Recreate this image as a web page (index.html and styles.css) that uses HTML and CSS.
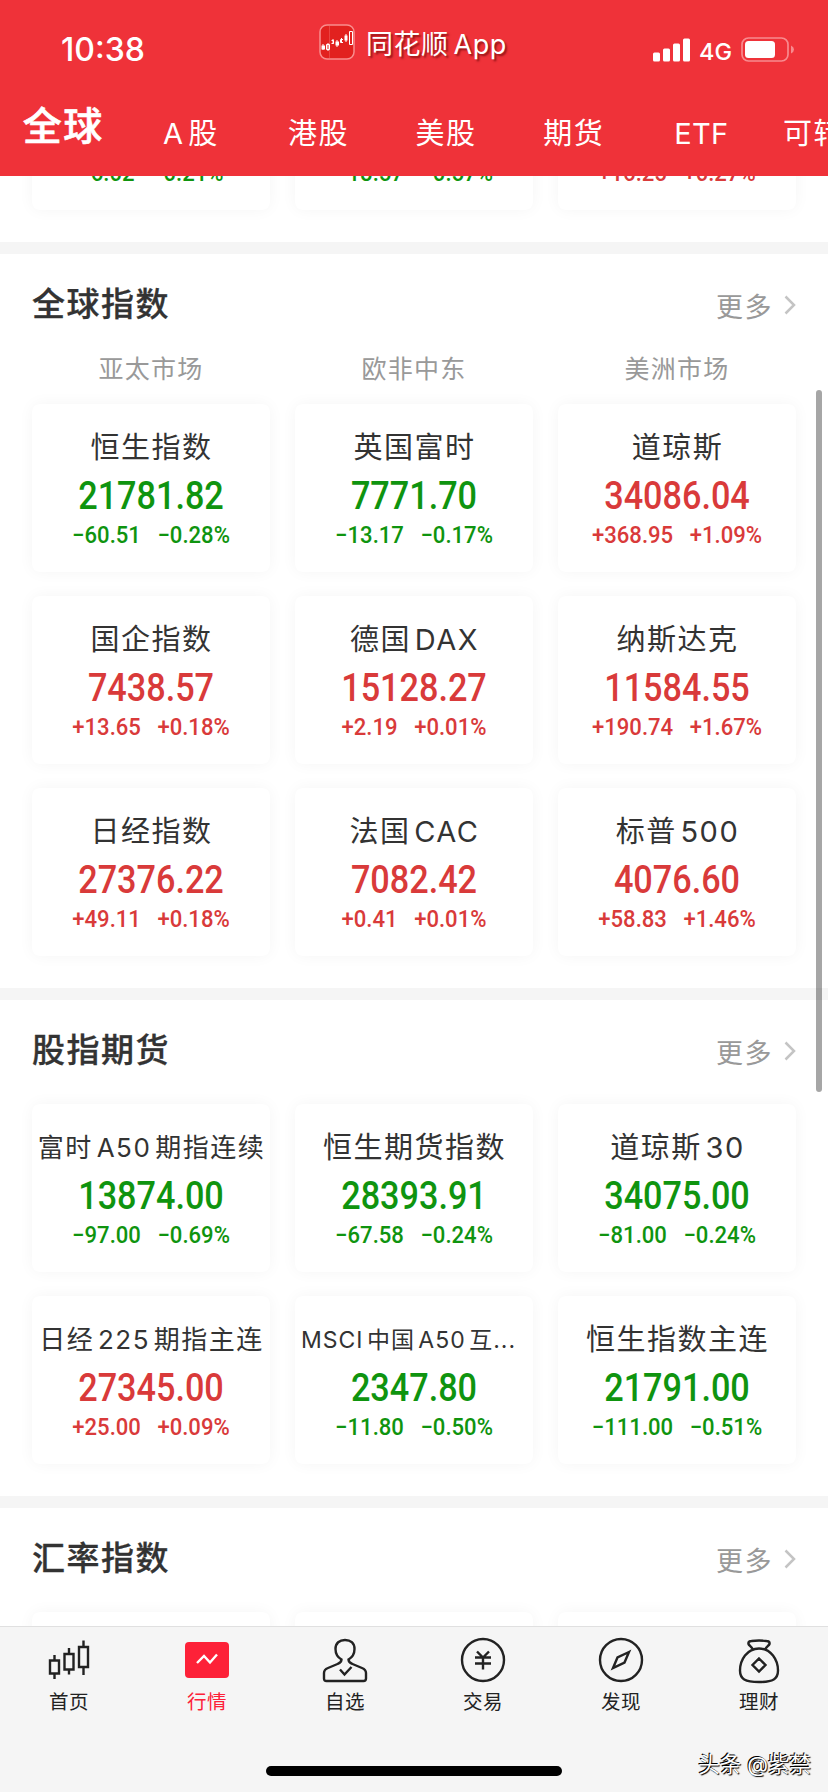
FILE: index.html
```
<!DOCTYPE html>
<html lang="zh-CN">
<head>
    <meta charset="UTF-8">
    <meta name="viewport" content="width=device-width, initial-scale=1.0">
    <title>同花顺 - 全球行情</title>
    <link rel="stylesheet" href="styles.css">
</head>
<body>
    <!-- 顶部 -->
    <header class="header">
        <div class="status-bar">
            <span class="time">10:38</span>
            <div class="brand">
                <svg class="brand-logo" viewBox="0 0 36 36">
                    <rect x="1" y="1" width="34" height="34" rx="7" fill="#e2211f" stroke="#f98d8d" stroke-width="1.5"/>
                    <path d="M10.5 2v32" stroke="#ee5350" stroke-width=".7"/>
                    <path fill="#fff" d="M2.500 21.500h3.500v4h-3.500zM16.500 17.500h3.500v4h-3.500zM25.500 11.500h3v5h-3z"/>
                    <path fill="none" stroke="#fff" stroke-width="1" d="M7.500 20.500h3v5h-3zM9 19v8M12.500 16.500h2v3h-2M14 15v5M24 15.500h-2.500v3H24M22.500 14v5M27 10v8M30.500 7.500h3v13h-3zM4 20v6M18 16v7"/>
                </svg>
                <span>同花顺 App</span>
            </div>
            <div class="status-icons">
                <svg class="signal" viewBox="0 0 38 24">
                    <g fill="#fff">
                        <rect x="0" y="14.500" width="7" height="9" rx="1.500"/>
                        <rect x="10" y="10.500" width="7" height="13" rx="1.500"/>
                        <rect x="20" y="5.500" width="7" height="18" rx="1.500"/>
                        <rect x="30" y="0.500" width="7" height="23" rx="1.500"/>
                    </g>
                </svg>
                <span class="network">4G</span>
                <svg class="battery" viewBox="0 0 54 26">
                    <rect x="1" y="1" width="46" height="23" rx="6.500" fill="none" stroke="#f88a8e" stroke-width="1.700"/>
                    <rect x="4" y="4" width="30" height="17" rx="3.500" fill="#fff"/>
                    <path d="M50 8.500q3 1.500 3 4t-3 4z" fill="#f88a8e"/>
                </svg>
            </div>
        </div>
        <nav class="market-tabs">
            <a class="active">全球</a>
            <a>A 股</a>
            <a>港股</a>
            <a>美股</a>
            <a>期货</a>
            <a class="latin">ETF</a>
            <a>可转债</a>
        </nav>
    </header>

    <!-- 行情列表 -->
    <main class="content">
        <section class="section scrolled">
            <div class="grid">
                <div class="card down"><h3>上证指数</h3><p class="price">3263.41</p><p class="change"><span>−6.02</span><span>−0.21%</span></p></div>
                <div class="card down"><h3>深证成指</h3><p class="price">12054.30</p><p class="change"><span>−18.57</span><span>−0.57%</span></p></div>
                <div class="card up"><h3>创业板指</h3><p class="price">2613.85</p><p class="change"><span>+16.25</span><span>+0.27%</span></p></div>
            </div>
        </section>

        <section class="section">
            <div class="section-head">
                <h2>全球指数</h2>
                <a class="more">更多 <svg viewBox="0 0 12 20"><path d="M1.500 1.500 10 10l-8.500 8.500"/></svg></a>
            </div>
            <div class="regions">
                <span>亚太市场</span>
                <span>欧非中东</span>
                <span>美洲市场</span>
            </div>
            <div class="grid">
                <div class="card down"><h3>恒生指数</h3><p class="price">21781.82</p><p class="change"><span>−60.51</span><span>−0.28%</span></p></div>
                <div class="card down"><h3>英国富时</h3><p class="price">7771.70</p><p class="change"><span>−13.17</span><span>−0.17%</span></p></div>
                <div class="card up"><h3>道琼斯</h3><p class="price">34086.04</p><p class="change"><span>+368.95</span><span>+1.09%</span></p></div>
                <div class="card up"><h3>国企指数</h3><p class="price">7438.57</p><p class="change"><span>+13.65</span><span>+0.18%</span></p></div>
                <div class="card up"><h3>德国 DAX</h3><p class="price">15128.27</p><p class="change"><span>+2.19</span><span>+0.01%</span></p></div>
                <div class="card up"><h3>纳斯达克</h3><p class="price">11584.55</p><p class="change"><span>+190.74</span><span>+1.67%</span></p></div>
                <div class="card up"><h3>日经指数</h3><p class="price">27376.22</p><p class="change"><span>+49.11</span><span>+0.18%</span></p></div>
                <div class="card up"><h3>法国 CAC</h3><p class="price">7082.42</p><p class="change"><span>+0.41</span><span>+0.01%</span></p></div>
                <div class="card up"><h3>标普 500</h3><p class="price">4076.60</p><p class="change"><span>+58.83</span><span>+1.46%</span></p></div>
            </div>
        </section>

        <section class="section">
            <div class="section-head">
                <h2>股指期货</h2>
                <a class="more">更多 <svg viewBox="0 0 12 20"><path d="M1.500 1.500 10 10l-8.500 8.500"/></svg></a>
            </div>
            <div class="grid">
                <div class="card down"><h3 class="long">富时 A50 期指连续</h3><p class="price">13874.00</p><p class="change"><span>−97.00</span><span>−0.69%</span></p></div>
                <div class="card down"><h3>恒生期货指数</h3><p class="price">28393.91</p><p class="change"><span>−67.58</span><span>−0.24%</span></p></div>
                <div class="card down"><h3>道琼斯 30</h3><p class="price">34075.00</p><p class="change"><span>−81.00</span><span>−0.24%</span></p></div>
                <div class="card up"><h3 class="long">日经 225 期指主连</h3><p class="price">27345.00</p><p class="change"><span>+25.00</span><span>+0.09%</span></p></div>
                <div class="card down"><h3 class="longer">MSCI 中国 A50 互...</h3><p class="price">2347.80</p><p class="change"><span>−11.80</span><span>−0.50%</span></p></div>
                <div class="card down"><h3>恒生指数主连</h3><p class="price">21791.00</p><p class="change"><span>−111.00</span><span>−0.51%</span></p></div>
            </div>
        </section>

        <section class="section">
            <div class="section-head">
                <h2>汇率指数</h2>
                <a class="more">更多 <svg viewBox="0 0 12 20"><path d="M1.500 1.500 10 10l-8.500 8.500"/></svg></a>
            </div>
            <div class="grid">
                <div class="card"></div>
                <div class="card"></div>
                <div class="card"></div>
            </div>
        </section>
    </main>
    <div class="scrollbar"></div>

    <!-- 底部导航 -->
    <footer class="footer">
        <nav class="tab-bar">
            <a>
                <svg viewBox="0 0 46 46"><path d="M4 19.500h9v13H4zM8.500 14v5.500M8.500 32.500v5.500M18.500 13h9v15.500h-9zM23 7v6M23 28.500v5M33 6h9v20h-9zM37.500-.5V6M37.500 26v8"/></svg>
                <span>首页</span>
            </a>
            <a class="active">
                <svg viewBox="0 0 46 46"><rect x="1" y="1" width="44" height="36" rx="4"/><path d="m13 22 7-7 6 6.500 7-8"/></svg>
                <span>行情</span>
            </a>
            <a>
                <svg viewBox="0 0 46 46"><path d="M19.500 18.500c-3.500-2-6-6-6-10.500 0-6 4-9 9.500-9s9.500 3 9.500 9c0 4.500-2.500 8.500-6 10.500 0 3 1.500 3.500 4 4.500l9.500 4c3 1.200 4 2.200 4 5v5.500q0 2.500-2.500 2.500h-37Q2 40 2 37.500V32c0-2.800 1-3.800 4-5l9.500-4c2.500-1 4-1.500 4-4.500zM18 28.500l4.500 5 7-7.500"/></svg>
                <span>自选</span>
            </a>
            <a>
                <svg viewBox="0 0 46 46"><circle cx="23" cy="19" r="21"/><path d="m17 10.500 6 6 6-6M15 16.500h16M15 22.500h16M23 16.500v12"/></svg>
                <span>交易</span>
            </a>
            <a>
                <svg viewBox="0 0 46 46"><circle cx="23" cy="19" r="21"/><path d="M31 11 19.500 16.500 15 27l11.500-5.500z"/></svg>
                <span>发现</span>
            </a>
            <a>
                <svg viewBox="0 0 46 46"><path d="M17 8.500C16 6 13 4.500 12.500 3c-.5-2 1-3 3-3q7.500-1 15 0c2 0 3.500 1 3 3C33 4.500 30 6 29 8.500M23 7.500C11 7.500 4 19 4 29.500 4 38 9 41 23 41s19-3 19-11.500C42 19 35 7.500 23 7.500zM23 17.500l6.500 6.500-6.500 6.500-6.500-6.500z"/></svg>
                <span>理财</span>
            </a>
        </nav>
        <div class="home-indicator"></div>
        <span class="watermark">头条 @紫禁</span>
    </footer>
</body>
</html>
```
FILE: styles.css
```
* {
    box-sizing: border-box;
    margin: 0;
    padding: 0;
}

body {
    position: relative;
    display: flex;
    flex-direction: column;
    width: 828px;
    height: 1792px;
    overflow: hidden;
    background: #fff;
    color: #333;
    font-family: Inter, "Noto Sans CJK SC", sans-serif;
}

/* 顶部 */
.header {
    flex: none;
    height: 176px;
    background: #ef3239;
    color: #fff;
}

.status-bar {
    display: grid;
    grid-template-columns: 319px 1fr auto;
    height: 96px;
    padding-right: 33px;
}

.time {
    padding: 30px 0 0 61px;
    font-size: 32px;
    line-height: 40px;
    font-weight: 500;
}

.brand {
    display: flex;
    align-items: center;
    gap: 11px;
    height: 84px;
    font-size: 27px;
    letter-spacing: 0.5px;
    word-spacing: -3px;
    text-shadow: 2px 2px 2px rgba(90, 0, 0, 0.6);
}

.brand-logo {
    width: 36px;
    height: 36px;
}

.status-icons {
    display: flex;
    align-items: center;
    height: 100px;
}

.signal {
    width: 38px;
    height: 24px;
}

.network {
    margin: 2px 9px 0 8px;
    font-size: 23.500px;
    font-weight: 500;
}

.battery {
    width: 54px;
    height: 26px;
}

.market-tabs {
    display: flex;
    height: 80px;
    margin-left: -1px;
    overflow: hidden;
}

.market-tabs a {
    flex: 0 0 127.600px;
    padding: 17px 0 0 1px;
    font-size: 29px;
    line-height: 42px;
    letter-spacing: 1.500px;
    word-spacing: -6px;
    text-align: center;
    white-space: nowrap;
}

.market-tabs .latin {
    letter-spacing: 0.300px;
}

.market-tabs .active {
    padding-top: 9px;
    font-size: 39px;
    font-weight: 500;
    -webkit-text-stroke: 0.600px #fff;
}

/* 行情列表 */
.content {
    flex: 1;
    min-height: 0;
    overflow: hidden;
}

.section {
    padding: 0 32px 32px;
    border-bottom: 12px solid #f5f5f5;
}

/* 首个板块已滚动到顶部栏下方 */
.scrolled .grid {
    margin-top: -134px;
}

.section-head {
    display: flex;
    align-items: center;
    justify-content: space-between;
    height: 98px;
    margin-bottom: 6px;
}

.section-head h2 {
    padding-bottom: 3px;
    font-size: 33px;
    font-weight: 500;
    letter-spacing: 1.500px;
    -webkit-text-stroke: 0.300px #333;
}

.more {
    display: flex;
    align-items: center;
    gap: 11px;
    padding-top: 4px;
    color: #999;
    font-size: 27px;
    letter-spacing: 1.500px;
}

.more svg {
    width: 12px;
    height: 20px;
    fill: none;
    stroke: #c4c4c4;
    stroke-width: 2.500;
}

.regions {
    display: grid;
    grid-template-columns: repeat(3, 1fr);
    column-gap: 25px;
    margin: -6px 0 18px;
    color: #999;
    font-size: 25px;
    line-height: 34px;
    letter-spacing: 1.200px;
    text-align: center;
}

.grid {
    display: grid;
    grid-template-columns: repeat(3, 1fr);
    gap: 24px 25px;
}

.card {
    height: 168px;
    padding-top: 23px;
    border-radius: 8px;
    background: #fff;
    box-shadow: 0 0 16px rgba(0, 0, 0, 0.045);
    text-align: center;
    white-space: nowrap;
}

.card h3 {
    padding-left: 1px;
    color: #333;
    font-size: 29px;
    font-weight: 400;
    line-height: 42px;
    letter-spacing: 1.500px;
    word-spacing: -6px;
}

.card .long {
    font-size: 26px;
    word-spacing: -5px;
}

.card .longer {
    padding-right: 12px;
    font-size: 23px;
    letter-spacing: 1px;
    word-spacing: -4px;
}

.price,
.change {
    font-family: Roboto, sans-serif;
    font-weight: 500;
}

.price {
    font-size: 38px;
    line-height: 54px;
    transform: scaleX(0.9);
}

.change {
    display: flex;
    justify-content: center;
    gap: 18px;
    margin-top: -2px;
    font-size: 24px;
    line-height: 28px;
    transform: scaleX(0.92);
}

.up {
    color: #d93a3a;
}

.down {
    color: #0f940f;
}

.scrollbar {
    position: absolute;
    top: 390px;
    right: 6px;
    width: 6px;
    height: 702px;
    border-radius: 3px;
    background: rgba(0, 0, 0, 0.35);
}

/* 底部导航 */
.footer {
    position: relative;
    flex: none;
    height: 166px;
    border-top: 1px solid #e0e0e0;
    background: #f5f5f5;
}

.tab-bar {
    display: flex;
    height: 139px;
}

.tab-bar a {
    flex: 1;
    display: flex;
    flex-direction: column;
    align-items: center;
    gap: 1px;
    padding-top: 14px;
    color: #222;
    font-size: 19.500px;
    line-height: 28px;
    letter-spacing: 0.500px;
}

.tab-bar svg {
    width: 46px;
    height: 46px;
    overflow: visible;
    fill: none;
    stroke: #222;
    stroke-width: 2.400;
}

.tab-bar .active {
    color: #fd2138;
}

.tab-bar .active rect {
    fill: #fd2138;
    stroke: none;
}

.tab-bar .active path {
    stroke: #fff;
}

.home-indicator {
    width: 296px;
    height: 10px;
    margin: 0 auto;
    border-radius: 5px;
    background: #000;
}

.watermark {
    position: absolute;
    right: 17px;
    bottom: 13px;
    color: #fff;
    font-size: 21.500px;
    line-height: 30px;
    text-shadow: -1px -1px 0 #000, 1px 1px 1px #000;
}
```
